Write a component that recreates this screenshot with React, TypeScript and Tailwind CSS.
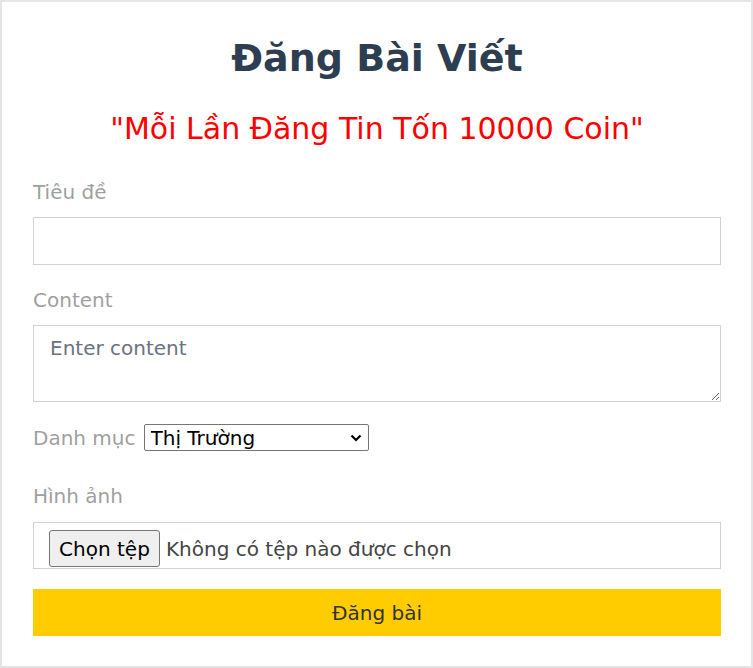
import React from "react";

export default function App() {
  const font = { fontFamily: '"DejaVu Sans", "Noto Sans", sans-serif' };
  return (
    <div
      className="w-[753px] h-[668px] border-2 border-[#e4e4e7] bg-white pl-[31px] pr-[30px] pt-[34px] box-border"
      style={font}
    >
      <h1 className="text-center text-[38px] leading-[44px] font-bold text-[#2c3e50]">
        Đăng Bài Viết
      </h1>
      <h2 className="mt-[31px] text-center text-[30px] leading-[36px] font-normal text-[#ff0000]">
        "Mỗi Lần Đăng Tin Tốn 10000 Coin"
      </h2>

      <div className="mt-[33px] text-[20px] leading-[24px] text-[#9f9f9f]">Tiêu đề</div>
      <input
        type="text"
        className="mt-[13px] block w-full h-[48px] border border-[#cfd3d8] px-4 text-[20px] outline-none"
      />

      <div className="mt-[23px] text-[20px] leading-[24px] text-[#9f9f9f]">Content</div>
      <textarea
        placeholder="Enter content"
        className="mt-[13px] block w-full h-[77px] border border-[#cfd3d8] px-4 pt-[10px] text-[20px] leading-[24px] outline-none placeholder:text-[#6b7280]"
      />

      <div className="mt-[22px] flex items-center h-[27px]">
        <span className="text-[20px] leading-[24px] text-[#9f9f9f] mr-[8px]">Danh mục</span>
        <div className="relative w-[225px] h-[27px]">
          <select className="appearance-none w-full h-full border border-[#767676] rounded-[2px] pl-[6px] text-[20px] leading-[24px] text-black bg-white">
            <option>Thị Trường</option>
          </select>
          <svg
            className="pointer-events-none absolute right-[7px] top-[10px]"
            width="12"
            height="8"
            viewBox="0 0 12 8"
          >
            <path d="M1.5 1.5 L6 6 L10.5 1.5" fill="none" stroke="#000" strokeWidth="2.2" />
          </svg>
        </div>
      </div>

      <div className="mt-[33px] text-[20px] leading-[24px] text-[#9f9f9f]">Hình ảnh</div>
      <div className="mt-[14px] flex items-end h-[47px] border border-[#cfd3d8] pl-[15px] pb-px">
        <div className="flex items-center justify-center w-[111px] h-[37px] border border-[#767676] rounded-[3px] bg-[#efefef] text-[20px] text-black">
          Chọn tệp
        </div>
        <span className="ml-[6px] mb-[6px] text-[20px] leading-[24px] text-[#444]">
          Không có tệp nào được chọn
        </span>
      </div>

      <button className="mt-[20px] block w-full h-[47px] bg-[#ffcc00] text-[20px] text-[#333]">
        Đăng bài
      </button>
    </div>
  );
}
